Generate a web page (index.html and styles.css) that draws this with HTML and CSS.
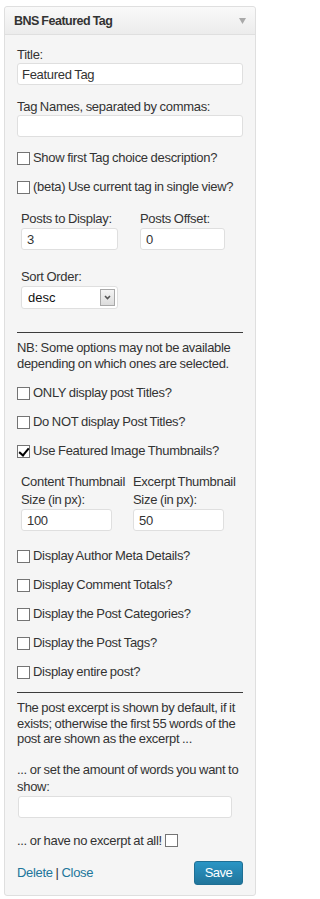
FILE: index.html
```html
<!DOCTYPE html>
<html lang="en">
<head>
<meta charset="utf-8">
<title>BNS Featured Tag</title>
<link rel="stylesheet" href="styles.css">
</head>
<body>
<div class="widget">
  <div class="widget-top">
    <h3 class="widget-title">BNS Featured Tag</h3>
    <span class="toggle"><svg width="7" height="6" viewBox="0 0 7 6"><path d="M0 0H7L3.5 6Z" fill="#a9a9a9"/></svg></span>
  </div>
  <form class="widget-inside">
    <div class="field">
      <label class="lbl">Title:</label>
      <input class="text" type="text" value="Featured Tag">
    </div>
    <div class="field gap-14">
      <label class="lbl">Tag Names, separated by commas:</label>
      <input class="text" type="text" value="">
    </div>
    <label class="check gap-13"><input type="checkbox">Show first Tag choice description?</label>
    <label class="check gap-13"><input type="checkbox">(beta) Use current tag in single view?</label>
    <div class="cols cols-posts">
      <div class="col col-a">
        <label class="lbl">Posts to Display:</label>
        <input class="text w97" type="text" value="3">
      </div>
      <div class="col col-b">
        <label class="lbl">Posts Offset:</label>
        <input class="text w85" type="text" value="0">
      </div>
    </div>
    <div class="sort">
      <label class="lbl">Sort Order:</label>
      <div class="select-wrap">
        <select class="select"><option>desc</option><option>asc</option></select>
        <span class="select-arrow"><svg width="7" height="5" viewBox="0 0 7 5"><path d="M1 1L3.5 3.5L6 1" fill="none" stroke="#555" stroke-width="1.6"/></svg></span>
      </div>
    </div>
    <hr class="rule rule-1">
    <p class="note">NB: Some options may not be available<br>depending on which ones are selected.</p>
    <label class="check gap-14"><input type="checkbox">ONLY display post Titles?</label>
    <label class="check gap-13"><input type="checkbox">Do NOT display Post Titles?</label>
    <label class="check gap-13"><input type="checkbox" checked>Use Featured Image Thumbnails?</label>
    <div class="cols cols-thumb">
      <div class="col col-c">
        <label class="lbl2">Content Thumbnail<br>Size (in px):</label>
        <input class="text w91" type="text" value="100">
      </div>
      <div class="col col-d">
        <label class="lbl2">Excerpt Thumbnail<br>Size (in px):</label>
        <input class="text w91" type="text" value="50">
      </div>
    </div>
    <label class="check gap-17"><input type="checkbox">Display Author Meta Details?</label>
    <label class="check gap-13"><input type="checkbox">Display Comment Totals?</label>
    <label class="check gap-13"><input type="checkbox">Display the Post Categories?</label>
    <label class="check gap-13"><input type="checkbox">Display the Post Tags?</label>
    <label class="check gap-13"><input type="checkbox">Display entire post?</label>
    <hr class="rule rule-2">
    <p class="note">The post excerpt is shown by default, if it<br>exists; otherwise the first 55 words of the<br>post are shown as the excerpt ...</p>
    <div class="field words">
      <label class="lbl3">... or set the amount of words you want to<br>show:</label>
      <input class="text w214" type="text" value="">
    </div>
    <label class="no-excerpt">... or have no excerpt at all!<input type="checkbox"></label>
    <div class="actions">
      <div class="links"><a href="#remove">Delete</a> | <a href="#close">Close</a></div>
      <button class="save" type="button">Save</button>
    </div>
  </form>
</div>
</body>
</html>
```
FILE: styles.css
```css
* { box-sizing: border-box; }
html, body { margin: 0; padding: 0; background: #fff; }
body {
  font-family: "Liberation Sans", Arial, sans-serif;
  font-size: 13px;
  letter-spacing: -0.3px;
  word-spacing: -0.5px;
  color: #333;
}
.widget {
  margin: 6px 4px 0;
  width: 252px;
  border: 1px solid #dfdfdf;
  border-radius: 3px;
  background: #f5f5f5;
}
.widget-top {
  height: 28px;
  display: flex;
  align-items: center;
  justify-content: space-between;
  padding: 0 9px 0 9px;
  background: linear-gradient(#f9f9f9, #ececec);
  border-bottom: 1px solid #dfdfdf;
  border-radius: 3px 3px 0 0;
}
.widget-title {
  margin: 0;
  font-size: 12.5px;
  letter-spacing: -0.5px;
  font-weight: bold;
  color: #333;
  line-height: 16px;
}
.toggle { display: flex; margin-top: 1px; }
.widget-inside { padding: 12px 12px 10px; }
.field { margin: 0; }
.lbl { display: block; line-height: 16px; white-space: nowrap; }
.lbl2 { display: block; line-height: 18px; white-space: nowrap; }
.lbl3 { display: block; line-height: 17px; white-space: nowrap; }
.text {
  display: block;
  width: 100%;
  height: 22px;
  margin: 0;
  padding: 0 4px;
  border: 1px solid #dfdfdf;
  border-radius: 3px;
  background: #fff;
  font: 13px "Liberation Sans", Arial, sans-serif;
  letter-spacing: -0.3px;
  word-spacing: -0.5px;
  color: #333;
  outline: none;
}
.gap-13 { margin-top: 13px; }
.gap-14 { margin-top: 14px; }
.gap-17 { margin-top: 17px; }
.check {
  display: flex;
  align-items: center;
  height: 16px;
  line-height: 16px;
  white-space: nowrap;
}
.check input, .no-excerpt input {
  appearance: none;
  -webkit-appearance: none;
  width: 13px;
  height: 13px;
  margin: 0 3px 0 0;
  border: 1px solid #747474;
  background: #fff;
  position: relative;
  flex: none;
}
.check input:checked::after {
  content: "";
  position: absolute;
  left: 3px;
  top: 0px;
  width: 4px;
  height: 8px;
  border-right: 2px solid #000;
  border-bottom: 2px solid #000;
  transform: rotate(40deg);
}
.cols { display: flex; padding-left: 4px; }
.cols-posts { margin-top: 16px; }
.col-a { width: 119px; }
.col-b { flex: 1; }
.cols-posts .text { margin-top: 1px; padding-left: 5px; }
.w97 { width: 97px; }
.w85 { width: 85px; }
.w91 { width: 91px; }
.cols-thumb { margin-top: 14px; }
.col-c { width: 112px; }
.col-d { flex: 1; }
.cols-thumb .text { padding-left: 5px; }
.sort { margin-top: 19px; padding-left: 4px; }
.select-wrap { position: relative; width: 97px; height: 23px; margin-top: 1px; }
.select {
  appearance: none;
  -webkit-appearance: none;
  width: 97px;
  height: 23px;
  margin: 0;
  padding: 0 0 0 6px;
  border: 1px solid #dfdfdf;
  border-radius: 3px;
  background: #fff;
  font: 13px "Liberation Sans", Arial, sans-serif;
  color: #111;
  outline: none;
}
.select-arrow {
  position: absolute;
  top: 3px;
  right: 3px;
  width: 15px;
  height: 17px;
  border: 1px solid #a8a8a8;
  background: linear-gradient(#f4f4f4, #dcdcdc);
  display: flex;
  align-items: center;
  justify-content: center;
  pointer-events: none;
}
.rule {
  border: 0;
  border-top: 1px solid #3c3c3c;
  height: 0;
  margin: 0;
}
.rule-1 { margin-top: 23px; }
.rule-2 { margin-top: 12px; }
.note { margin: 7px 0 0; line-height: 15.5px; white-space: nowrap; }
.words { margin-top: 14px; }
.w214 { width: 214px; margin-left: 1px; margin-top: 1px; }
.no-excerpt {
  display: flex;
  align-items: center;
  margin-top: 15px;
  height: 16px;
  line-height: 16px;
  white-space: nowrap;
}
.no-excerpt input { margin: 0 0 0 3px; }
.actions {
  display: flex;
  justify-content: space-between;
  align-items: center;
  margin-top: 12px;
  height: 24px;
}
.links a { color: #21759b; text-decoration: none; }
.save {
  width: 49px;
  height: 24px;
  padding: 0;
  border: 1px solid #1f6f94;
  border-radius: 3px;
  background: linear-gradient(#2a95c5, #21759b);
  color: #fff;
  font: 13px "Liberation Sans", Arial, sans-serif;
  letter-spacing: -0.5px;
  line-height: 20px;
}
```
